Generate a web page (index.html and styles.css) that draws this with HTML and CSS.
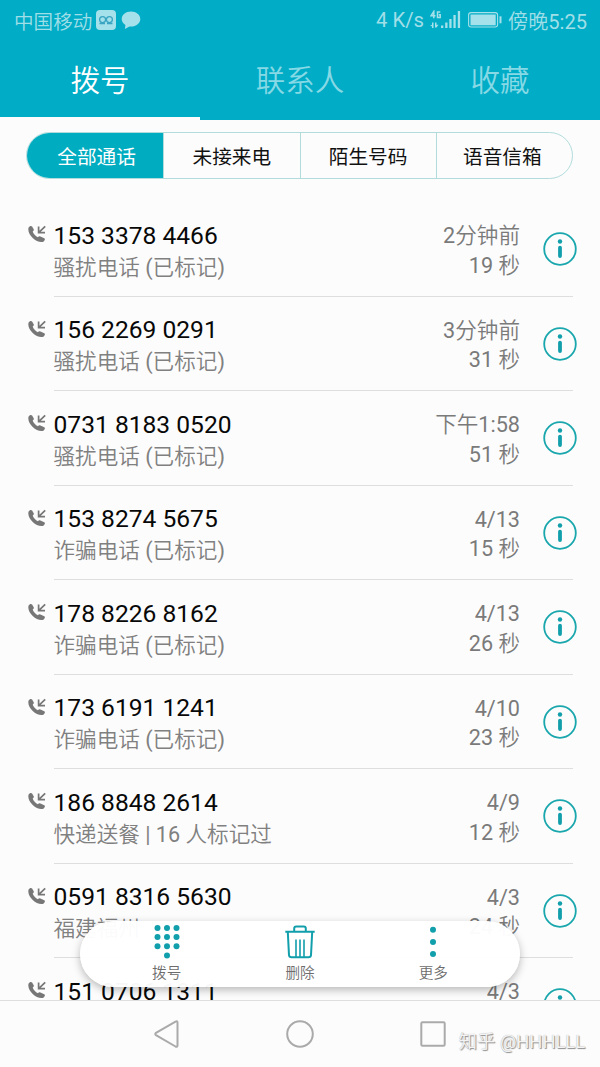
FILE: index.html
```html
<!DOCTYPE html>
<html lang="zh-CN">
<head>
<meta charset="utf-8">
<title>通话记录</title>
<link rel="stylesheet" href="styles.css">
</head>
<body>
<svg class="defs" width="0" height="0">
  <symbol id="call" viewBox="0 0 18 18">
    <path class="fill" d="M.6 2.600C1.400 1 3.200.4 4.100 1.500L5.700 4.300c.5 1-.1 1.700-1 2.300.6 2.200 2.900 4.600 5.200 5.700.7-.9 1.500-1.400 2.500-.8l3.900 1.800c1.300.8.3 2.700-1 3.500C9.200 19-1.600 9.500.6 2.600z"/>
    <path class="stroke" d="M17.200 1.300 10.900 7.300M10.600 1.600v6.100h6.400"/>
  </symbol>
  <symbol id="info" viewBox="0 0 34 34">
    <circle class="ring" cx="17" cy="17" r="15.800"/>
    <circle class="dot" cx="17" cy="9.500" r="2.200"/>
    <path class="stem" d="M17 15.700v8.300"/>
  </symbol>
</svg>
<div class="screen">
  <header class="header">
    <div class="status">
      <span class="carrier">中国移动</span>
      <svg class="app-icon" width="20" height="20" viewBox="0 0 20 20"><rect width="20" height="20" rx="4" fill="#a5e1ea"/><g fill="none" stroke="#3aa5c2" stroke-width="1.300"><circle cx="6.600" cy="9.600" r="3"/><circle cx="13.400" cy="9.600" r="3"/><path d="M3.500 13.500h5.500M11 13.500h5.500"/></g></svg>
      <svg class="bubble" width="20" height="19" viewBox="0 0 20 19"><path fill="#a5e1ea" d="M10 .5c5.300 0 9.300 3.300 9.300 7.500s-4 7.600-9.300 7.600l-1.500-.1-4.600 2.500.5-4.100C2 12.500.7 10.400.7 8 .7 3.800 4.700.5 10 .5z"/></svg>
      <span class="speed">4 K/s</span>
      <svg class="signal" width="31" height="20" viewBox="0 0 31 20"><g fill="none" stroke="#a5e1ea" stroke-width="1.500"><path d="M3.800 8.200V1.500L1 5.800h4.500M10.300 2H7.500v5.400h2.700V4.800H8.800"/></g><path fill="#a5e1ea" d="M0 15h2v-2.500h1.500V18H2v-1.500zM5 12.500h1.500v2.200h2l-2 2.800H5zM11 15.500h2.300V18H11zM15.200 12.500h2.300v5.500h-2.300zM19.300 9h2.300v9h-2.300zM23.400 5h2.300v13h-2.300zM27.800 1h2.300v17h-2.300z"/></svg>
      <svg class="battery" width="34" height="16" viewBox="0 0 34 16"><rect x=".6" y=".6" width="29" height="14.400" rx="2.500" fill="none" stroke="#a5e1ea" stroke-width="1.100"/><rect x="2.500" y="2.500" width="25.200" height="10.800" fill="#a5e1ea"/><path fill="#a5e1ea" d="M31.500 4.300h2v7h-2z"/></svg>
      <span class="clock">傍晚5:25</span>
    </div>
    <nav class="tabs">
      <span class="tab active">拨号</span><span class="tab">联系人</span><span class="tab">收藏</span>
    </nav>
  </header>
  <main class="content">
    <div class="filters">
      <span class="filter selected">全部通话</span><span class="filter">未接来电</span><span class="filter">陌生号码</span><span class="filter">语音信箱</span>
    </div>
    <ul class="calls">
      <li class="call"><svg class="call-icon"><use href="#call"/></svg><div class="body"><div class="who"><span class="number">153 3378 4466</span><span class="note">骚扰电话 (已标记)</span></div><div class="when"><span>2分钟前</span><span>19 秒</span></div><svg class="info"><use href="#info"/></svg></div></li>
      <li class="call"><svg class="call-icon"><use href="#call"/></svg><div class="body"><div class="who"><span class="number">156 2269 0291</span><span class="note">骚扰电话 (已标记)</span></div><div class="when"><span>3分钟前</span><span>31 秒</span></div><svg class="info"><use href="#info"/></svg></div></li>
      <li class="call"><svg class="call-icon"><use href="#call"/></svg><div class="body"><div class="who"><span class="number">0731 8183 0520</span><span class="note">骚扰电话 (已标记)</span></div><div class="when"><span>下午1:58</span><span>51 秒</span></div><svg class="info"><use href="#info"/></svg></div></li>
      <li class="call"><svg class="call-icon"><use href="#call"/></svg><div class="body"><div class="who"><span class="number">153 8274 5675</span><span class="note">诈骗电话 (已标记)</span></div><div class="when"><span>4/13</span><span>15 秒</span></div><svg class="info"><use href="#info"/></svg></div></li>
      <li class="call"><svg class="call-icon"><use href="#call"/></svg><div class="body"><div class="who"><span class="number">178 8226 8162</span><span class="note">诈骗电话 (已标记)</span></div><div class="when"><span>4/13</span><span>26 秒</span></div><svg class="info"><use href="#info"/></svg></div></li>
      <li class="call"><svg class="call-icon"><use href="#call"/></svg><div class="body"><div class="who"><span class="number">173 6191 1241</span><span class="note">诈骗电话 (已标记)</span></div><div class="when"><span>4/10</span><span>23 秒</span></div><svg class="info"><use href="#info"/></svg></div></li>
      <li class="call"><svg class="call-icon"><use href="#call"/></svg><div class="body"><div class="who"><span class="number">186 8848 2614</span><span class="note">快递送餐 | 16 人标记过</span></div><div class="when"><span>4/9</span><span>12 秒</span></div><svg class="info"><use href="#info"/></svg></div></li>
      <li class="call"><svg class="call-icon"><use href="#call"/></svg><div class="body"><div class="who"><span class="number">0591 8316 5630</span><span class="note">福建福州</span></div><div class="when"><span>4/3</span><span>24 秒</span></div><svg class="info"><use href="#info"/></svg></div></li>
      <li class="call"><svg class="call-icon"><use href="#call"/></svg><div class="body"><div class="who"><span class="number">151 0706 1311</span></div><div class="when"><span>4/3</span></div><svg class="info"><use href="#info"/></svg></div></li>
    </ul>
    <div class="toolbar">
      <div class="tool"><svg width="34" height="36" viewBox="0 0 34 36"><g class="dots"><circle cx="7.500" cy="4" r="3"/><circle cx="17" cy="4" r="3"/><circle cx="26.500" cy="4" r="3"/><circle cx="7.500" cy="13" r="3"/><circle cx="17" cy="13" r="3"/><circle cx="26.500" cy="13" r="3"/><circle cx="7.500" cy="22.300" r="3"/><circle cx="17" cy="22.300" r="3"/><circle cx="26.500" cy="22.300" r="3"/><circle cx="17" cy="31.500" r="3"/></g></svg><span>拨号</span></div>
      <div class="tool"><svg width="34" height="36" viewBox="0 0 34 36"><g class="trash"><path d="M2.300 7.800h29.400M11.200 7.500V4.500q0-2 2-2h7.600q2 0 2 2v3M4.800 8l1.200 23q.2 2.300 2.500 2.300h17q2.300 0 2.500-2.300l1.200-23"/><path class="slats" d="M13 15.500v17.500M17 15.500v17.500M21 15.500v17.500"/></g></svg><span>删除</span></div>
      <div class="tool"><svg width="34" height="36" viewBox="0 0 34 36"><g class="dots"><circle cx="17" cy="5.800" r="3"/><circle cx="17" cy="18" r="3"/><circle cx="17" cy="30" r="3"/></g></svg><span>更多</span></div>
    </div>
  </main>
  <footer class="navbar">
    <svg width="34" height="34" viewBox="0 0 34 34"><path d="M27.500 5.800v22.500q0 2.300-2 1.200L6 18.200q-1.500-1.200 0-2.400L25.500 4.600q2-1 2 1.200z"/></svg>
    <svg width="34" height="34" viewBox="0 0 34 34"><circle cx="17" cy="17" r="12.800"/></svg>
    <svg width="34" height="34" viewBox="0 0 34 34"><rect x="5.300" y="5.300" width="23.400" height="23.400" rx="1.200"/></svg>
    <span class="watermark">知乎 @HHHLLL</span>
  </footer>
</div>
</body>
</html>
```

FILE: styles.css
```css
* { box-sizing: border-box; }
body {
  margin: 0;
  font-family: Roboto, "Noto Sans CJK SC", sans-serif;
  background: #fcfcfc;
}
.defs { position: absolute; }
.status, .tab, .note, .when, .tool, .watermark {
  font-family: Roboto, "Noto Sans CJK SC DemiLight", "Noto Sans CJK SC Light", "Noto Sans CJK SC", sans-serif;
  font-weight: 400;
}
.screen {
  width: 600px;
  height: 1067px;
  display: flex;
  flex-direction: column;
  overflow: hidden;
}
.header {
  height: 120px;
  flex: none;
  background: #00acc6;
  color: #a0dfe8;
}
.status {
  height: 40px;
  display: flex;
  align-items: center;
  padding: 0 13px 0 14px;
  font-size: 19.600px;
  white-space: nowrap;
}
.app-icon { margin-left: 4px; }
.bubble { margin-left: 5px; }
.speed { margin-left: auto; font-size: 20.300px; }
.signal { margin-left: 6px; }
.battery { margin-left: 7px; }
.clock { margin-left: 6px; font-size: 20.100px; }
.tabs {
  height: 80px;
  display: grid;
  grid-template-columns: repeat(3, 1fr);
}
.tab {
  display: flex;
  align-items: center;
  justify-content: center;
  font-size: 29.500px;
  padding-bottom: 2px;
  color: #86d9e5;
  border-bottom: 3px solid transparent;
}
.tab.active { color: #fff; border-bottom-color: #fcfcfc; }
.content {
  position: relative;
  height: 880px;
  flex: none;
  overflow: hidden;
  padding-top: 12px;
}
.filters {
  margin: 0 27px 0 26px;
  height: 47px;
  display: grid;
  grid-template-columns: repeat(4, 1fr);
  border: 1px solid #b2dcdc;
  border-radius: 24px;
  overflow: hidden;
}
.filter {
  display: flex;
  align-items: center;
  justify-content: center;
  font-size: 19.700px;
  color: #111;
  border-left: 1px solid #b2dcdc;
}
.filter:last-child { padding-right: 4px; }
.filter.selected {
  margin: -1px 0 -1px -1px;
  padding: 0 0 0 4px;
  background: #00acc0;
  color: #fff;
  border-left: 0;
}
.calls {
  list-style: none;
  margin: 23px 27px 0 28px;
  padding: 0;
}
.call { display: flex; height: 94.500px; }
.call-icon {
  width: 18px;
  height: 18px;
  flex: none;
  margin: 23px 7.500px 0 0;
}
#call .fill { fill: #777; }
#call .stroke { fill: none; stroke: #777; stroke-width: 1.700; }
.body {
  flex: 1;
  display: flex;
  border-bottom: 1px solid #dedede;
}
.who, .when {
  display: flex;
  flex-direction: column;
  white-space: nowrap;
  color: #7d7d7d;
  font-size: 21.600px;
}
.who { flex: 1; padding-top: 16.500px; }
.number { color: #080808; font-size: 24.600px; line-height: 33px; }
.note { line-height: 32px; color: #808080; }
.when { align-items: flex-end; padding-top: 19px; line-height: 29.500px; }
.when span { color: #7a7a7a; }
.info {
  width: 34px;
  height: 34px;
  flex: none;
  margin: 30px -4px 0 23px;
}
#info .ring { fill: none; stroke: #19a7ad; stroke-width: 1.800; }
#info .dot { fill: #129fac; }
#info .stem { stroke: #129fac; stroke-width: 3.800; stroke-linecap: round; }
.toolbar {
  position: absolute;
  left: 80px;
  top: 801px;
  width: 440px;
  height: 66px;
  border-radius: 33px;
  background: rgba(255, 255, 255, .97);
  box-shadow: 0 3px 8px rgba(0, 0, 0, .27);
  display: grid;
  grid-template-columns: repeat(3, 133.300px);
  justify-content: center;
}
.tool {
  display: flex;
  flex-direction: column;
  align-items: center;
  padding-top: 3px;
  font-size: 14.600px;
  line-height: 26px;
  color: #6c6c6c;
}
.tool svg { flex: none; }
.dots { fill: #129fac; }
.trash { fill: none; stroke: #129fac; stroke-width: 2; stroke-linejoin: round; }
.trash .slats { stroke-width: 1.600; }
.navbar {
  position: relative;
  height: 67px;
  flex: none;
  border-top: 1px solid #dedede;
  background: #fcfcfc;
  display: grid;
  grid-template-columns: repeat(3, 133.300px);
  justify-content: center;
  justify-items: center;
  align-items: center;
}
.navbar svg { fill: none; stroke: #aaa; stroke-width: 2; }
.watermark {
  position: absolute;
  right: 15px;
  top: 28px;
  font-size: 18.300px;
  line-height: 26px;
  color: #f4f4f4;
  text-shadow: 1px 1px 1px #8c8c8c, 0 0 1px #aaa;
  white-space: nowrap;
}
```
